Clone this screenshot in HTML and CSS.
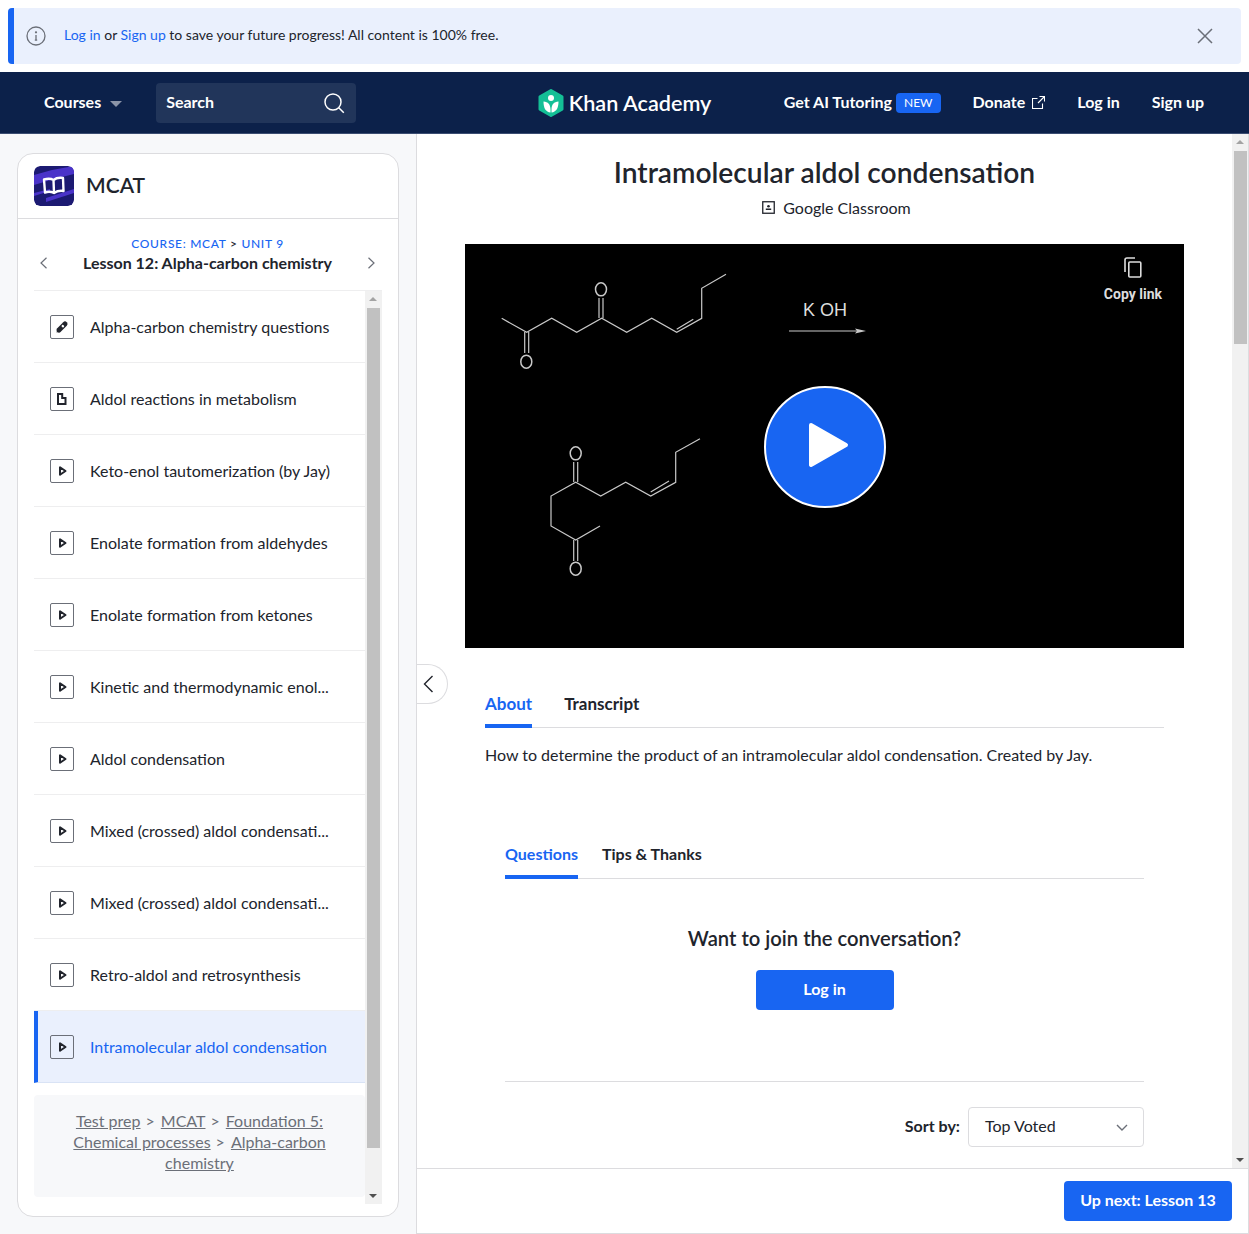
FILE: index.html
```html
<!DOCTYPE html>
<html lang="en">
  <head>
    <meta charset="UTF-8" />
    <meta name="viewport" content="width=device-width, initial-scale=1.0" />
    <title>Intramolecular aldol condensation</title>
    <link rel="stylesheet" href="styles.css">
  </head>
  <body>
    <svg class="defs" width="0" height="0">
      <symbol id="icoPlay" viewBox="0 0 24 24">
        <path d="M10 8.200v7.600l5.500-3.800z" fill="none" stroke="#21242c" stroke-width="2" stroke-linejoin="round" />
      </symbol>
    </svg>

    <div class="banner">
      <svg class="banner-info" width="20" height="20" viewBox="0 0 20 20" fill="none" stroke="#6b6f78" stroke-width="1.3">
        <circle cx="10" cy="10" r="9" />
        <path d="M10 9v5M8.800 14.200h2.400" />
        <circle cx="10" cy="6.300" r=".5" />
      </svg>
      <p class="banner-text"><a href="#">Log in</a> or <a href="#">Sign up</a> to save your future progress! All content is 100% free.</p>
      <svg class="banner-close" width="16" height="16" viewBox="0 0 16 16" stroke="#6b6f78" stroke-width="1.5">
        <path d="M1 1l14 14M15 1L1 15" />
      </svg>
    </div>

    <header class="topbar">
      <div class="topbar-left">
        <span class="nav-link">Courses</span>
        <span class="caret"></span>
        <div class="search">
          <span class="nav-link">Search</span>
          <svg width="22" height="22" viewBox="0 0 22 22" fill="none" stroke="#fff" stroke-width="1.5">
            <circle cx="10" cy="10" r="8" />
            <path d="M15.800 15.800l5 5" />
          </svg>
        </div>
      </div>
      <div class="logo">
        <svg width="28" height="28" viewBox="0 0 28 28">
          <path d="M14 1.500l11 6.300v12.400L14 26.500 3 20.200V7.800z" fill="#14bf96" stroke="#14bf96" stroke-width="3" stroke-linejoin="round" />
          <circle cx="14" cy="9" r="3" fill="#fff" />
          <path d="M6.500 12.500c4.600.3 7 3 7 8v3c-4.600-.6-7-4-7-11zM21.500 12.500c-4.600.3-7 3-7 8v3c4.600-.6 7-4 7-11z" fill="#fff" />
        </svg>
        <span class="logo-name">Khan Academy</span>
      </div>
      <nav class="topbar-right">
        <span class="nav-item"><span class="nav-link">Get AI Tutoring</span><span class="badge">NEW</span></span>
        <span class="nav-item donate">
          <span class="nav-link">Donate</span>
          <svg width="13" height="13" viewBox="0 0 13 13" fill="none" stroke="#fff" stroke-width="1.1">
            <path d="M10.500 7.500v5h-10v-10h5M7.500.5h5v5M12.500.5l-6.500 6.500" />
          </svg>
        </span>
        <span class="nav-link">Log in</span>
        <span class="nav-link">Sign up</span>
      </nav>
    </header>

    <div class="page">
      <aside class="sidebar">
        <div class="card">
          <div class="card-head">
            <svg class="course-icon" width="40" height="40" viewBox="0 0 40 40">
              <rect width="40" height="40" rx="6" fill="#1c1a72" />
              <path d="M0 9l18-5 22-4v8l-20 5-20 6zM12 32l28-9v4l-28 9zM0 27l16-4v2L0 30z" fill="#4a33c9" />
              <path d="M10 13.500c3.500-1 7-1 9.500.5l.5 13c-3-1.500-6-1.500-9-.5zM19.500 14c2.500-2 6-2.500 9.500-2l.5 13c-3-.5-6.500 0-9.500 2" fill="none" stroke="#fff" stroke-width="2.400" stroke-linejoin="round" />
            </svg>
            <span class="course-name">MCAT</span>
          </div>
          <div class="lesson-head">
            <svg class="chev" width="9" height="12" viewBox="0 0 9 12" fill="none" stroke="#6b6f78" stroke-width="1.2"><path d="M7.500.8L2 6l5.500 5.200" /></svg>
            <div class="lesson-title">
              <div class="crumb">COURSE: MCAT <i>&gt;</i> UNIT 9</div>
              <div class="lesson-name">Lesson 12: Alpha-carbon chemistry</div>
            </div>
            <svg class="chev" width="9" height="12" viewBox="0 0 9 12" fill="none" stroke="#6b6f78" stroke-width="1.2"><path d="M1.500.8L7 6l-5.500 5.200" /></svg>
          </div>
          <div class="list-wrap">
            <div class="list">
              <a class="row" href="#">
                <span class="row-icon">
                  <svg width="24" height="24" viewBox="0 0 24 24">
                    <path d="M9 15L15 9" stroke="#21242c" stroke-width="5" stroke-linecap="round" />
                    <path d="M6.500 17.500l1-4 3 3z" fill="#21242c" />
                    <path d="M13 11.200l-.2-.1" stroke="#fff" stroke-width="2.400" stroke-linecap="round" />
                  </svg>
                </span>
                Alpha-carbon chemistry questions
              </a>
              <a class="row" href="#">
                <span class="row-icon">
                  <svg width="24" height="24" viewBox="0 0 24 24"><path d="M8 7h4.200v4h3.300v6H8z" fill="none" stroke="#21242c" stroke-width="2" /></svg>
                </span>
                Aldol reactions in metabolism
              </a>
              <a class="row" href="#"><span class="row-icon"><svg width="24" height="24"><use href="#icoPlay" /></svg></span>Keto-enol tautomerization (by Jay)</a>
              <a class="row" href="#"><span class="row-icon"><svg width="24" height="24"><use href="#icoPlay" /></svg></span>Enolate formation from aldehydes</a>
              <a class="row" href="#"><span class="row-icon"><svg width="24" height="24"><use href="#icoPlay" /></svg></span>Enolate formation from ketones</a>
              <a class="row" href="#"><span class="row-icon"><svg width="24" height="24"><use href="#icoPlay" /></svg></span>Kinetic and thermodynamic enol...</a>
              <a class="row" href="#"><span class="row-icon"><svg width="24" height="24"><use href="#icoPlay" /></svg></span>Aldol condensation</a>
              <a class="row" href="#"><span class="row-icon"><svg width="24" height="24"><use href="#icoPlay" /></svg></span>Mixed (crossed) aldol condensati...</a>
              <a class="row" href="#"><span class="row-icon"><svg width="24" height="24"><use href="#icoPlay" /></svg></span>Mixed (crossed) aldol condensati...</a>
              <a class="row" href="#"><span class="row-icon"><svg width="24" height="24"><use href="#icoPlay" /></svg></span>Retro-aldol and retrosynthesis</a>
              <a class="row row-active" href="#"><span class="row-icon"><svg width="24" height="24"><use href="#icoPlay" /></svg></span>Intramolecular aldol condensation</a>
              <div class="breadcrumbs">
                <div><a href="#">Test prep</a><i>&gt;</i><a href="#">MCAT</a><i>&gt;</i><a href="#">Foundation 5:</a></div>
                <div><a href="#">Chemical processes</a><i>&gt;</i><a href="#">Alpha-carbon</a></div>
                <div><a href="#">chemistry</a></div>
              </div>
            </div>
            <div class="scrollbar scrollbar-list">
              <span class="arrow-up"></span>
              <span class="thumb"></span>
              <span class="arrow-down"></span>
            </div>
          </div>
        </div>
      </aside>

      <main class="main">
        <button class="collapse">
          <svg width="11" height="18" viewBox="0 0 11 18" fill="none" stroke="#21242c" stroke-width="1.400"><path d="M9.500 1L1.500 9l8 8" /></svg>
        </button>
        <div class="main-scroll">
          <div class="content">
            <h1 class="title">Intramolecular aldol condensation</h1>
            <div class="classroom">
              <svg width="13" height="13" viewBox="0 0 13 13">
                <rect x=".75" y=".75" width="11.500" height="11.500" fill="none" stroke="#21242c" stroke-width="1.300" />
                <circle cx="6.500" cy="5.200" r="1.300" fill="#21242c" />
                <rect x="3.800" y="7.500" width="5.400" height="1.500" fill="#21242c" />
              </svg>
              <span>Google Classroom</span>
            </div>

            <div class="video">
              <svg class="board" width="719" height="404" viewBox="0 0 719 404" fill="none" stroke="#c9c9c9" stroke-width="1.200">
                <path d="M36.700 74.300L61.700 88.300 86.700 74.300 111.700 88.300 136.700 74.300 161.700 88.300 186.700 74.300 211.700 88.300 236.700 74.300V44.300L261 30.300" />
                <path d="M59.700 88v21M63.700 88v21M134 54v20M138 54v20M211.700 85.300L228.300 75.300" />
                <ellipse cx="61.300" cy="117.700" rx="5.500" ry="6.500" stroke-width="1.500" />
                <ellipse cx="136" cy="45.300" rx="5.500" ry="6.500" stroke-width="1.500" />
                <path d="M135 282L110.700 296 86 282V252L110.700 238.300 135.700 252 160.700 238.300 185.700 252 210.700 238.300V208.300L235 194.700" />
                <path d="M108.700 218v20M112.700 218v20M108.700 296v21M112.700 296v21M185.700 248L204 237" />
                <ellipse cx="110.700" cy="209.300" rx="5.500" ry="6.500" stroke-width="1.500" />
                <ellipse cx="110.700" cy="324.700" rx="5.500" ry="6.500" stroke-width="1.500" />
                <text class="board-text" x="338" y="72">K OH</text>
                <path d="M324 87h72" />
                <path d="M390 84.500l11 2.500-11 2.500 2-2.500z" fill="#c9c9c9" stroke="none" />
              </svg>
              <div class="copy-link">
                <svg width="20" height="22" viewBox="0 0 20 22" fill="none" stroke="#ddd" stroke-width="1.600">
                  <path d="M2 15V3a2 2 0 012-2h8" />
                  <rect x="5.800" y="5" width="12" height="15" rx="1" />
                </svg>
                <span>Copy link</span>
              </div>
              <button class="play">
                <svg width="42" height="46" viewBox="0 0 42 46"><path d="M3 3l35 20L3 43z" fill="#fff" stroke="#fff" stroke-width="4" stroke-linejoin="round" /></svg>
              </button>
            </div>

            <div class="about">
              <div class="tabs">
                <span class="tab tab-on">About</span>
                <span class="tab">Transcript</span>
              </div>
              <p class="about-text">How to determine the product of an intramolecular aldol condensation. Created by Jay.</p>
            </div>

            <div class="discussion">
              <div class="tabs tabs-small">
                <span class="tab tab-on">Questions</span>
                <span class="tab">Tips &amp; Thanks</span>
              </div>
              <div class="join">
                <h2 class="join-title">Want to join the conversation?</h2>
                <button class="btn join-btn">Log in</button>
              </div>
              <div class="sort">
                <span class="sort-label">Sort by:</span>
                <div class="select">
                  <span>Top Voted</span>
                  <svg width="12" height="8" viewBox="0 0 12 8" fill="none" stroke="#6b6f78" stroke-width="1.400"><path d="M1 1l5 5 5-5" /></svg>
                </div>
              </div>
            </div>
          </div>
          <div class="scrollbar scrollbar-main">
            <span class="arrow-up"></span>
            <span class="thumb"></span>
            <span class="arrow-down"></span>
          </div>
        </div>
        <footer class="footer">
          <button class="btn next-btn">Up next: Lesson 13</button>
        </footer>
      </main>
    </div>
  </body>
</html>
```
FILE: styles.css
```css
* {
  box-sizing: border-box;
}

html,
body {
  height: 100%;
}

body {
  margin: 0;
  height: 1234px;
  overflow: hidden;
  font-family: Lato, "Noto Sans", sans-serif;
  font-size: 16px;
  color: #21242c;
  background: #fff;
}

a {
  color: inherit;
  text-decoration: none;
}

button {
  font-family: inherit;
  border: none;
  padding: 0;
}

.defs {
  position: absolute;
}

/* banner */
.banner {
  display: flex;
  align-items: center;
  height: 56px;
  margin: 8px 8px 8px;
  padding: 0 28px 0 12px;
  background: #eaf0fd;
  border-left: 6px solid #1865f2;
  border-radius: 4px;
}

.banner-info {
  flex: none;
}

.banner-text {
  flex: 1;
  margin: 0 0 4px 18px;
  font-size: 14px;
}

.banner-text a {
  color: #1865f2;
}

/* top nav */
.topbar {
  display: grid;
  grid-template-columns: 1fr auto 1fr;
  align-items: center;
  height: 62px;
  padding: 0 45px 0 44px;
  background: #0c214a;
  border-bottom: 1px solid #3b4d72;
  color: #fff;
}

.topbar-left,
.topbar-right,
.nav-item {
  display: flex;
  align-items: center;
}

.topbar-right {
  justify-content: flex-end;
  gap: 32px;
}

.nav-link {
  padding-bottom: 2px;
  font-weight: 700;
  font-size: 16px;
}

.caret {
  width: 0;
  height: 0;
  margin: 2px 34px 0 9px;
  border: 6px solid transparent;
  border-top-color: #8b94a8;
  border-bottom: none;
}

.search {
  display: flex;
  align-items: center;
  justify-content: space-between;
  width: 200px;
  height: 40px;
  padding: 0 11px 0 10px;
  background: #21355a;
  border-radius: 4px;
}

.logo {
  display: flex;
  align-items: center;
  gap: 4px;
}

.logo-name {
  font-size: 21.6px;
  font-weight: 600;
}

.badge {
  margin-left: 4px;
  padding: 0 8px;
  height: 20px;
  line-height: 20px;
  font-size: 12px;
  background: #1865f2;
  border-radius: 4px;
}

.donate svg {
  margin-left: 7px;
}

/* page split */
.page {
  display: flex;
  height: 1100px;
}

.sidebar {
  flex: none;
  width: 416px;
  padding: 19px 17px 17px;
  background: #f7f8fa;
}

.card {
  display: flex;
  flex-direction: column;
  width: 382px;
  height: 1064px;
  background: #fff;
  border: 1px solid #dcdcdf;
  border-radius: 16px;
}

.card-head {
  display: flex;
  align-items: center;
  gap: 12px;
  height: 65px;
  padding: 0 16px;
  border-bottom: 1px solid #dcdcdf;
}

.course-icon {
  border-radius: 6px;
}

.course-name {
  padding-bottom: 4px;
  font-size: 21px;
  font-weight: 600;
}

.lesson-head {
  display: flex;
  align-items: center;
  justify-content: space-between;
  height: 71px;
  padding: 0 22px 0 21px;
}

.chev {
  margin-top: 17px;
}

.lesson-title {
  text-align: center;
}

.crumb {
  font-size: 12px;
  line-height: 16px;
  letter-spacing: .7px;
  color: #1865f2;
  font-weight: 500;
}

.crumb i {
  font-style: normal;
  color: #21242c;
}

.lesson-name {
  font-weight: 700;
  line-height: 22px;
}

.list-wrap {
  display: flex;
  flex: none;
  height: 914px;
  margin: 0 16px;
  border-top: 1px solid #eeeeef;
}

.list {
  flex: 1;
  min-width: 0;
}

.row {
  display: flex;
  align-items: center;
  height: 72px;
  padding-left: 16px;
  border-bottom: 1px solid #eeeeef;
}

.row-icon {
  display: flex;
  flex: none;
  width: 24px;
  height: 24px;
  margin-right: 16px;
  align-items: center;
  justify-content: center;
  background: #fff;
  border: 1px solid #6b6f78;
  border-radius: 2px;
}

.row-icon svg {
  flex: none;
}

.row-active {
  padding-left: 12px;
  background: #eaf0fd;
  border-left: 4px solid #1865f2;
  color: #1865f2;
  border-bottom: 1px solid #d9e3f5;
}

.row-active .row-icon {
  background: transparent;
}

.breadcrumbs {
  margin-top: 12px;
  height: 102px;
  padding: 15px 16px;
  line-height: 21px;
  background: #f7f8fa;
  border-radius: 4px;
  text-align: center;
  color: #6b6f78;
}

.breadcrumbs a {
  text-decoration: underline;
}

.breadcrumbs i {
  font-style: normal;
  margin: 0 6px 0 5px;
}

/* fake scrollbars, classic look */
.scrollbar {
  position: relative;
  flex: none;
  width: 17px;
  background: #f1f1f1;
}

.thumb {
  position: absolute;
  left: 2px;
  width: 13px;
  background: #c1c1c1;
}

.arrow-up,
.arrow-down {
  position: absolute;
  left: 4px;
  width: 0;
  height: 0;
  border: 4.5px solid transparent;
}

.arrow-up {
  top: 6px;
  border-top: none;
  border-bottom-color: #a3a3a3;
}

.arrow-down {
  bottom: 6px;
  border-bottom: none;
  border-top-color: #505050;
}

.scrollbar-list .thumb {
  top: 17px;
  height: 840px;
}

.scrollbar-main .thumb {
  top: 17px;
  height: 193px;
}

/* main column */
.main {
  position: relative;
  display: flex;
  flex: 1;
  flex-direction: column;
  min-width: 0;
  border-left: 1px solid #dcdcdf;
  border-right: 1px solid #dcdcdf;
}

.main-scroll {
  display: flex;
  height: 1034px;
  overflow: hidden;
}

.content {
  flex: none;
  width: 815px;
  padding: 0 48px;
}

.title {
  margin: 19px 0 0;
  font-size: 28.2px;
  line-height: 38px;
  font-weight: 600;
  text-align: center;
}

.classroom {
  display: flex;
  align-items: center;
  justify-content: center;
  gap: 8px;
  margin-top: 2px;
  padding-left: 24px;
  height: 28px;
}

.video {
  position: relative;
  height: 404px;
  margin-top: 23px;
  background: #000;
}

.board {
  display: block;
}

.board-text {
  fill: #ddd;
  stroke: none;
  font-family: "Liberation Sans", sans-serif;
  font-size: 18px;
}

.copy-link {
  position: absolute;
  top: 13px;
  right: 22px;
  display: flex;
  flex-direction: column;
  align-items: center;
  gap: 7px;
  font-family: Roboto, sans-serif;
  font-size: 14px;
  font-weight: 700;
  color: #ddd;
}

.play {
  position: absolute;
  left: 299px;
  top: 142px;
  display: flex;
  align-items: center;
  justify-content: center;
  width: 122px;
  height: 122px;
  padding: 0 0 4px 8px;
  background: #1865f2;
  border: 2px solid #fff;
  border-radius: 50%;
}

.collapse {
  position: absolute;
  left: 0;
  top: 530px;
  display: flex;
  align-items: center;
  width: 31px;
  height: 40px;
  padding-left: 6px;
  background: #fff;
  border: 1px solid #dcdcdf;
  border-left: none;
  border-radius: 0 20px 20px 0;
}

.about {
  padding: 0 20px;
  margin-top: 37px;
}

.tabs {
  display: flex;
  gap: 32px;
  height: 43px;
  border-bottom: 1px solid #dcdcdf;
}

.tab {
  height: 43px;
  line-height: 38px;
  font-size: 17px;
  font-weight: 700;
}

.tab-on {
  color: #1865f2;
  border-bottom: 4px solid #1865f2;
}

.about-text {
  margin: 16px 0 0;
  line-height: 22px;
}

.discussion {
  margin-top: 68px;
  padding: 0 40px;
}

.tabs-small {
  gap: 24px;
  height: 45px;
}

.tabs-small .tab {
  height: 45px;
  line-height: 40px;
  font-size: 16px;
}

.join {
  display: flex;
  flex-direction: column;
  align-items: center;
  height: 203px;
  padding-top: 45px;
  border-bottom: 1px solid #dcdcdf;
}

.join-title {
  margin: 0;
  font-size: 20.2px;
  line-height: 28px;
  font-weight: 600;
}

.btn {
  padding-bottom: 4px;
  background: #1865f2;
  color: #fff;
  font-weight: 700;
  font-size: 16px;
  border-radius: 4px;
}

.join-btn {
  width: 138px;
  height: 40px;
  margin-top: 18px;
}

.sort {
  display: flex;
  align-items: center;
  justify-content: flex-end;
  gap: 8px;
  margin-top: 25px;
}

.sort-label {
  padding-bottom: 4px;
  font-weight: 700;
}

.select {
  display: flex;
  align-items: center;
  justify-content: space-between;
  width: 176px;
  height: 40px;
  padding: 0 15px 4px 16px;
  border: 1px solid #dcdcdf;
  border-radius: 4px;
}

.select svg {
  margin-top: 5px;
}

.footer {
  display: flex;
  align-items: center;
  justify-content: flex-end;
  height: 66px;
  padding: 0 16px;
  border-top: 1px solid #dcdcdf;
  border-bottom: 1px solid #dcdcdf;
}

.next-btn {
  width: 168px;
  height: 40px;
}
```
